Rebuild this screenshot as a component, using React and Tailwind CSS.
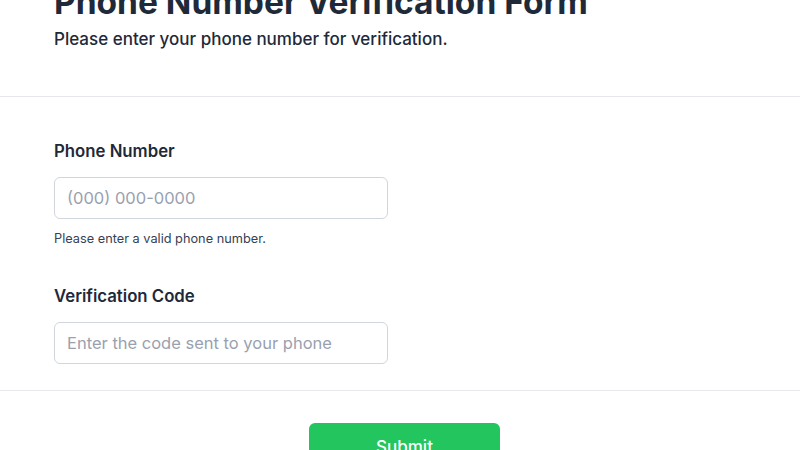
import React from "react";

const Field = ({ label, placeholder, hint, className = "" }) => {
  return (
    <div className={className}>
      <label className="block text-[16.75px] leading-6 font-semibold text-gray-800">{label}</label>
      <input
        type="text"
        placeholder={placeholder}
        className="mt-3.5 block h-[42px] w-[334px] rounded-md border border-gray-300 bg-white px-3 text-[16.5px] text-gray-800 placeholder-gray-400 outline-none"
      />
      {hint && <p className="mt-3 text-[12.75px] leading-4 text-gray-700">{hint}</p>}
    </div>
  );
};

const App = () => {
  return (
    <div className="h-screen overflow-hidden bg-white font-['Inter',sans-serif]">
      {/* Header */}
      <div className="-mt-[18px] px-[54px] pb-[45px]">
        <h1 className="text-[33.5px] leading-10 font-bold text-gray-800">
          Phone Number Verification Form
        </h1>
        <p className="mt-[5px] text-[17px] leading-6 font-medium text-gray-800">
          Please enter your phone number for verification.
        </p>
      </div>

      {/* Fields */}
      <div className="border-t border-gray-200 px-[54px] pt-[42px] pb-[26px]">
        <Field
          label="Phone Number"
          placeholder="(000) 000-0000"
          hint="Please enter a valid phone number."
        />
        <Field
          className="mt-[37px]"
          label="Verification Code"
          placeholder="Enter the code sent to your phone"
        />
      </div>

      {/* Footer */}
      <div className="flex justify-center border-t border-gray-200 pt-8 pl-[9px]">
        <button className="w-[191px] rounded-md bg-[#22c55e] py-3 text-[17px] font-medium text-white">
          Submit
        </button>
      </div>
    </div>
  );
};

export default App;
